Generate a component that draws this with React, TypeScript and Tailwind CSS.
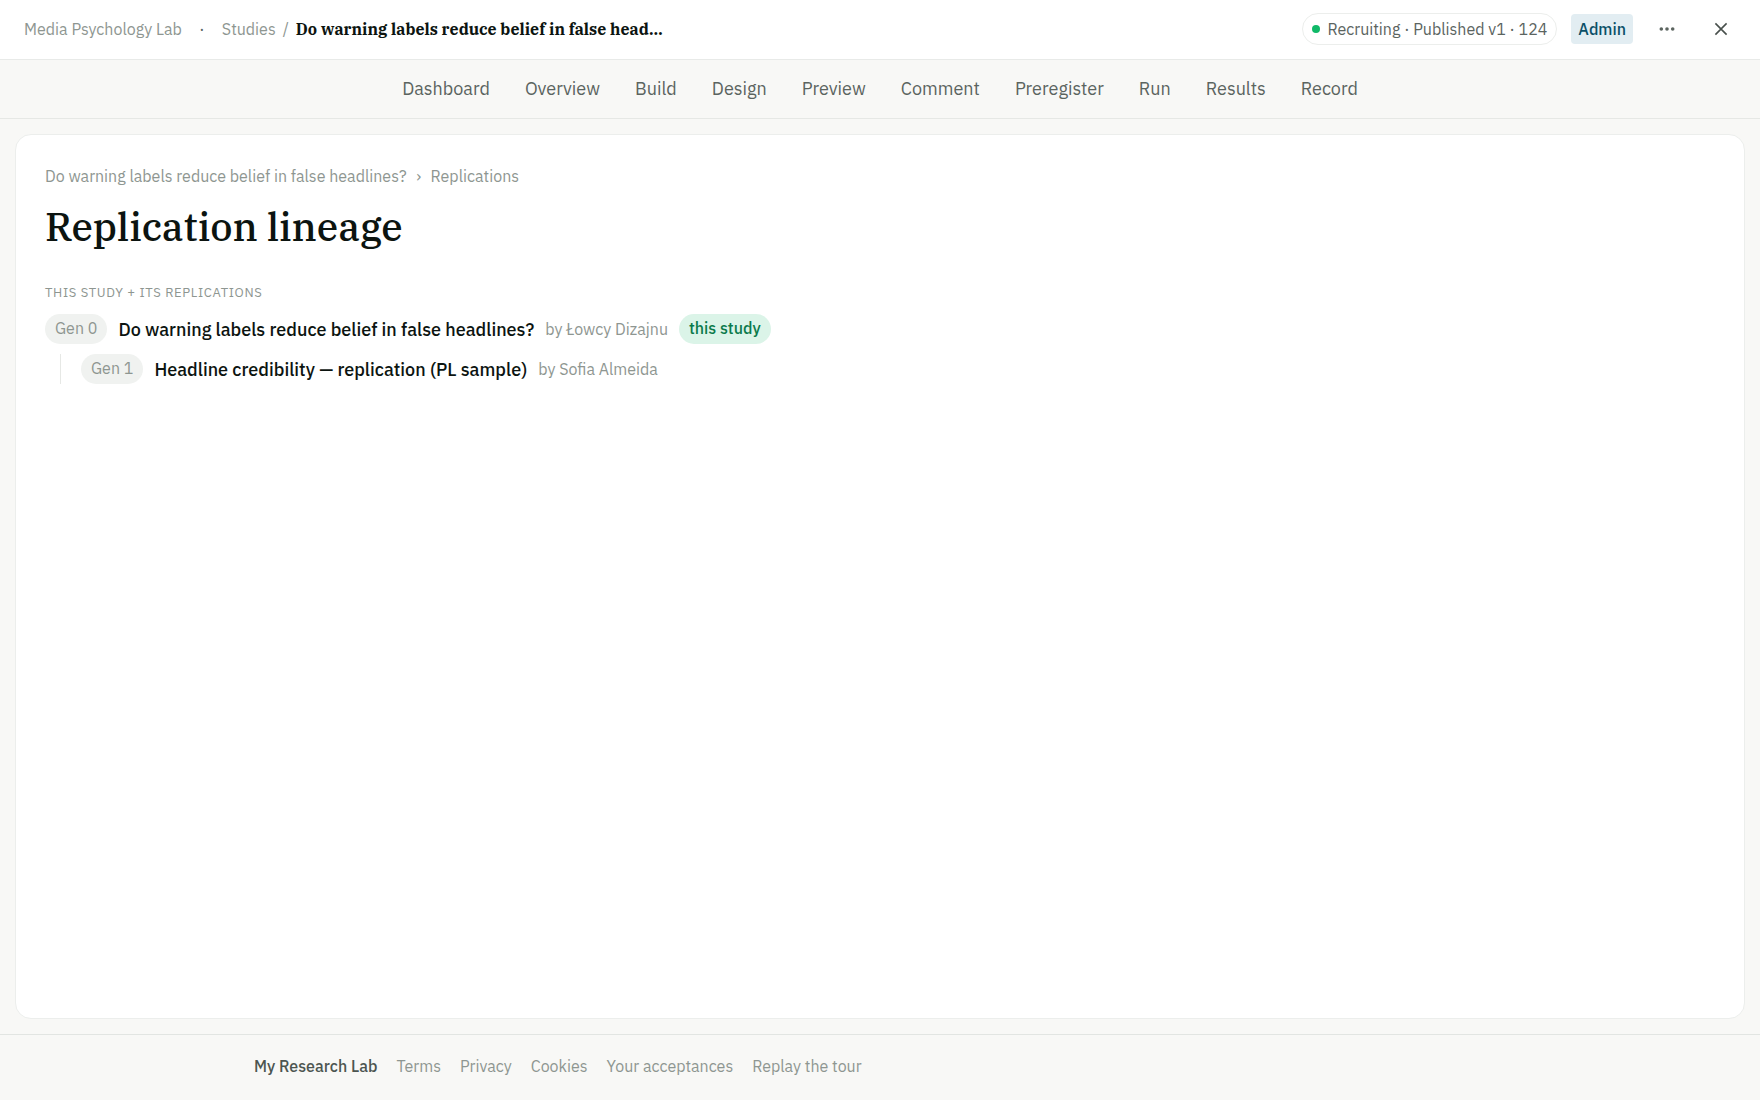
import React from "react";

const NAV_ITEMS = [
  "Dashboard",
  "Overview",
  "Build",
  "Design",
  "Preview",
  "Comment",
  "Preregister",
  "Run",
  "Results",
  "Record",
];

const FOOTER_LINKS = ["Terms", "Privacy", "Cookies", "Your acceptances", "Replay the tour"];

interface LineageEntry {
  generation: number;
  title: string;
  author: string;
  current: boolean;
}

const LINEAGE: LineageEntry[] = [
  {
    generation: 0,
    title: "Do warning labels reduce belief in false headlines?",
    author: "Łowcy Dizajnu",
    current: true,
  },
  {
    generation: 1,
    title: "Headline credibility — replication (PL sample)",
    author: "Sofia Almeida",
    current: false,
  },
];

function TopBar() {
  return (
    <header className="flex h-[60px] shrink-0 items-center justify-between border-b border-[#e8eae8] bg-white pb-0.5 pl-6 pr-[19px] text-[16px] leading-6">
      <div className="flex items-center text-[#8e9691]">
        <a href="#lab">Media Psychology Lab</a>
        <span className="w-10 text-center text-[#5b645f]">·</span>
        <a href="#studies">Studies</a>
        <span className="w-5 text-center">/</span>
        <span className="font-['IBM_Plex_Serif','Liberation_Serif',serif] font-bold text-[#0c1410]">
          Do warning labels reduce belief in false head…
        </span>
      </div>
      <div className="flex items-center gap-[14px]">
        <span className="flex h-8 items-center gap-[7px] rounded-full border border-[#eceeec] px-[9px] text-[#5b645f]">
          <span className="size-2 rounded-full bg-[#10b968]" />
          Recruiting · Published v1 · 124
        </span>
        <span className="flex h-[30px] items-center rounded bg-[#e2edf2] px-[7px] font-medium text-[#0b5068]">
          Admin
        </span>
        <button type="button" aria-label="More actions" className="flex size-10 items-center justify-center text-[#5b645f]">
          <svg width="16" height="16" viewBox="0 0 16 16" fill="currentColor">
            <circle cx="2.3" cy="8" r="1.8" />
            <circle cx="8" cy="8" r="1.8" />
            <circle cx="13.7" cy="8" r="1.8" />
          </svg>
        </button>
        <button type="button" aria-label="Close" className="flex size-10 items-center justify-center text-[#48504c]">
          <svg width="16" height="16" viewBox="0 0 16 16" fill="none" stroke="currentColor" strokeWidth="1.6">
            <path d="M2.4 2.4l11.2 11.2M13.6 2.4L2.4 13.6" />
          </svg>
        </button>
      </div>
    </header>
  );
}

function StudyNav() {
  return (
    <nav className="flex h-[59px] shrink-0 items-center justify-center gap-[35px] border-b border-[#e6e8e5] text-[18px] leading-6 text-[#5b645f]">
      {NAV_ITEMS.map((item) => (
        <a key={item} href={`#${item.toLowerCase()}`}>
          {item}
        </a>
      ))}
    </nav>
  );
}

function LineageRow({ entry }: { entry: LineageEntry }) {
  return (
    <div className="flex items-center gap-[11px]">
      <span className="flex h-[30px] items-center rounded-full bg-[#f0f2f0] px-[10px] pb-0.5 text-[16px] text-[#8e9691]">
        Gen {entry.generation}
      </span>
      <a href={`#gen-${entry.generation}`} className="text-[18px] font-medium text-[#0c1410]">
        {entry.title}
      </a>
      <span className="text-[16px] text-[#8e9691]">by {entry.author}</span>
      {entry.current && (
        <span className="flex h-[30px] items-center rounded-full bg-[#dbf4e8] px-[10px] pb-0.5 text-[16px] font-medium text-[#0b7a4b]">
          this study
        </span>
      )}
    </div>
  );
}

function Footer() {
  return (
    <footer className="shrink-0 border-t border-[#e2e5e2]">
      <div className="mx-auto flex h-[65px] max-w-[1280px] items-center gap-[19px] px-[14px] pb-[3px] text-[16px] text-[#8e9691]">
        <span className="font-medium text-[#4c5550]">My Research Lab</span>
        {FOOTER_LINKS.map((link) => (
          <a key={link} href="#footer">
            {link}
          </a>
        ))}
      </div>
    </footer>
  );
}

function App() {
  return (
    <div className="flex min-h-screen flex-col bg-[#f8f8f6] font-['IBM_Plex_Sans',Roboto,sans-serif]">
      <TopBar />
      <StudyNav />
      <main className="m-[15px] flex-1 rounded-2xl border border-[#eceeec] bg-white px-[29px] pt-[29px]">
        <div className="flex items-center text-[16px] leading-6 text-[#8e9691]">
          <a href="#study">Do warning labels reduce belief in false headlines?</a>
          <span className="w-6 text-center">›</span>
          <span>Replications</span>
        </div>
        <h1 className="mt-[14px] font-['IBM_Plex_Serif','Liberation_Serif',serif] text-[39px] font-medium leading-[50px] text-[#0c1410]">
          Replication lineage
        </h1>
        <h2 className="mt-[31px] text-[13px] uppercase leading-5 tracking-wider text-[#8e9691]">
          This study + its replications
        </h2>
        <ul className="mt-[11px] flex flex-col gap-[10px]">
          {LINEAGE.map((entry) => (
            <li key={entry.generation}>
              {entry.generation === 0 ? (
                <LineageRow entry={entry} />
              ) : (
                <div className="ml-[15px] border-l border-[#e6e8e5] pl-5">
                  <LineageRow entry={entry} />
                </div>
              )}
            </li>
          ))}
        </ul>
      </main>
      <Footer />
    </div>
  );
}

export default App;
